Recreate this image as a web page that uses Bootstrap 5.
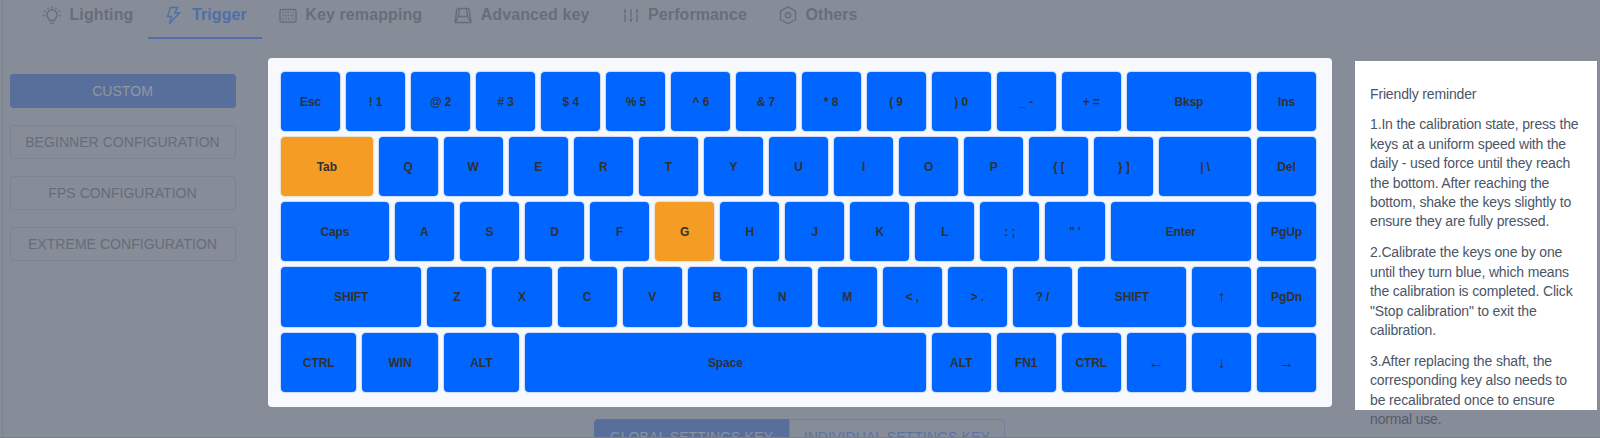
<!DOCTYPE html>
<html lang="en">
<head>
    <meta charset="UTF-8">
    <meta name="viewport" content="width=device-width, initial-scale=1.0">
    <title>Keyboard Calibration</title>
    <link href="https://cdn.jsdelivr.net/npm/bootstrap@5.3.0/dist/css/bootstrap.min.css" rel="stylesheet">
    <style>
        body {
            background: #878d98;
            font-family: "Liberation Sans", Arial, sans-serif;
            height: 438px;
        }
        .page {
            height: 438px;
            padding-left: 2px;
            border-bottom: 1px solid #7c7f8a;
        }
        .page-inner { border-left: 1px solid #7d838e; }

        .top-tabs { height: 39px; padding-left: 23px; }
        .top-tabs .nav-link {
            height: 39px;
            padding: 0 15px;
            gap: 8.5px;
            color: #686e79;
            font-size: 16px;
            font-weight: 700;
            line-height: 30px;
            letter-spacing: .1px;
            border-bottom: 2px solid transparent;
            white-space: nowrap;
        }
        .top-tabs .nav-link.active { color: #4f6fa8; border-color: #4f6fa8; }
        .top-tabs svg {
            flex: none;
            margin-top: 5.5px;
            fill: none;
            stroke: currentColor;
            stroke-width: 1.4;
        }

        .config-list { width: 226px; margin-left: 6.5px; padding-top: 35px; gap: 16.7px; }
        .btn-config {
            height: 34.2px;
            padding: 0;
            color: #666c78;
            border: 1px solid #7e848f;
            border-radius: 3px;
            font-size: 14px;
            line-height: 33px;
            letter-spacing: .05px;
            white-space: nowrap;
        }
        .btn-config.active { background: #576f9a; border-color: #576f9a; color: #9297a1; }

        .keyboard {
            width: 1064px;
            height: 349px;
            margin: 19px 0 0 32px;
            padding: 11px 12.5px 0 10.5px;
            background: #f8f9fc;
            border-radius: 4px;
        }
        .key-row { height: 65.15px; }
        .key-cell { padding: 3px; min-width: 0; }
        .key-cap {
            padding-top: 1px;
            background: #0066ff;
            border-radius: 4px;
            box-shadow: 0 0 1px 1px #c8daf9;
            color: #303133;
            font-size: 12px;
            font-weight: 700;
            letter-spacing: -.1px;
        }
        .key-cap.pending { background: #f59c24; box-shadow: 0 0 1px 1px #eadfd0; }
        .key-cap.arrow { font-size: 16px; font-weight: 400; }

        .reminder {
            width: 242px;
            height: 349px;
            margin: 22px 0 0 23.5px;
            padding: 23.5px 15px 0 15px;
            background: #fff;
            color: #4b5568;
            font-size: 14px;
            line-height: 19.4px;
            letter-spacing: -.15px;
        }
        .reminder p { margin-bottom: 11.5px; }
        .reminder .spill { color: #555b68; }

        .scope-switch { margin: 9px 0 0 591px; height: 22px; overflow: hidden; }
        .scope-switch .btn {
            height: 34px;
            padding: 0;
            width: 194.5px;
            border: 1px solid #7080a0;
            border-radius: 4px 0 0 4px;
            color: #5b73a3;
            font-size: 14px;
            line-height: 34px;
            letter-spacing: .1px;
            white-space: nowrap;
        }
        .scope-switch .btn.active { background: #576f9a; border-color: #576f9a; color: #8b92a0; }
        .scope-switch .btn:last-child { width: 216.5px; border-radius: 0 4px 4px 0; }
    </style>
</head>
<body class="overflow-hidden">
<div class="page overflow-hidden">
    <div class="page-inner h-100">
        <nav class="nav top-tabs flex-nowrap">
            <a class="nav-link d-flex" href="#" id="tabLighting">
                <svg width="20" height="20" viewBox="-1 0 20 20"><path d="M7.5 14.5C7.5 12.5 5 12 5 8.8a5 5 0 0 1 10 0c0 3.200-2.500 3.700-2.500 5.700zM8 17h4M10 .5v2M5.500 1.500l1 1.700M14.500 1.500l-1 1.700M1.800 4.500l1.800 1M18.200 4.500l-1.800 1M.8 9.500h2M17.200 9.500h2"/></svg>
                <span>Lighting</span>
            </a>
            <a class="nav-link d-flex active" href="#" id="tabTrigger">
                <svg width="20" height="20" viewBox="-2 0 20 20"><path d="M5.500 1.500h7L9.800 7H14.500L4.500 17.500l2-7H2.500z"/></svg>
                <span>Trigger</span>
            </a>
            <a class="nav-link d-flex" href="#" id="tabRemap">
                <svg width="20" height="20" viewBox="-2 0 20 20"><rect x="1" y="3.500" width="16" height="12.500" rx="1.500"/><path d="M3.500 6.500h8M3.500 9.500h8M3.500 12.700h1.500M6.500 12.700h5M13 12.700h1.500M14 6v4h-2" stroke-dasharray="1.500 1"/></svg>
                <span>Key remapping</span>
            </a>
            <a class="nav-link d-flex" href="#" id="tabAdvanced">
                <svg width="20" height="20" viewBox="-2 0 20 20"><path d="M4.500 2.500h9q1.400 0 1.700 1.200L17 16.500H1L2.800 3.700Q3.100 2.500 4.500 2.500zM5.500 3L4.200 10.500h9.600L12.500 3M4.200 10.500L1.500 16M13.800 10.500L16.500 16"/></svg>
                <span>Advanced key</span>
            </a>
            <a class="nav-link d-flex" href="#" id="tabPerformance">
                <svg width="20" height="20" viewBox="-2 0 20 20"><path d="M3 8v8M9 3v8M15 8v8M3 3v2M15 3v2M9 14v2"/><path d="M1.200 6.800L3 3.800l1.800 3zM13.200 6.800L15 3.800l1.800 3zM7.200 12.200L9 15.200l1.800-3z" fill="currentColor" stroke="none"/></svg>
                <span>Performance</span>
            </a>
            <a class="nav-link d-flex" href="#" id="tabOthers">
                <svg width="20" height="20" viewBox="-2 .7 20 20"><path d="M9 1.500l7.500 4.200v8.600L9 18.500 1.500 14.300V5.700z"/><circle cx="9" cy="10" r="2.600"/></svg>
                <span>Others</span>
            </a>
        </nav>

        <div class="d-flex align-items-start">
            <div class="config-list d-flex flex-column">
                <button class="btn btn-config active">CUSTOM</button>
                <button class="btn btn-config">BEGINNER CONFIGURATION</button>
                <button class="btn btn-config">FPS CONFIGURATION</button>
                <button class="btn btn-config">EXTREME CONFIGURATION</button>
            </div>
            <div class="keyboard flex-shrink-0" id="keyboard"></div>
            <aside class="reminder flex-shrink-0">
                <p>Friendly reminder</p>
                <p>1.In the calibration state, press the keys at a uniform speed with the daily - used force until they reach the bottom. After reaching the bottom, shake the keys slightly to ensure they are fully pressed.</p>
                <p>2.Calibrate the keys one by one until they turn blue, which means the calibration is completed. Click "Stop calibration" to exit the calibration.</p>
                <p>3.After replacing the shaft, the corresponding key also needs to be recalibrated once to ensure <span class="spill">normal use.</span></p>
            </aside>
        </div>

        <div class="scope-switch d-flex">
            <button class="btn active">GLOBAL SETTINGS KEY</button>
            <button class="btn">INDIVIDUAL SETTINGS KEY</button>
        </div>
    </div>
</div>

<script src="https://cdn.jsdelivr.net/npm/bootstrap@5.3.0/dist/js/bootstrap.bundle.min.js"></script>
<script>
    // a key is a label, or [label, width in key units]
    const rows = [
        ["Esc", "! 1", "@ 2", "# 3", "$ 4", "% 5", "^ 6", "& 7", "* 8", "( 9", ") 0", "_ -", "+ =", ["Bksp", 2], "Ins"],
        [["Tab", 1.5], "Q", "W", "E", "R", "T", "Y", "U", "I", "O", "P", "{ [", "} ]", ["| \\", 1.5], "Del"],
        [["Caps", 1.75], "A", "S", "D", "F", "G", "H", "J", "K", "L", ": ;", "\" '", ["Enter", 2.25], "PgUp"],
        [["SHIFT", 2.25], "Z", "X", "C", "V", "B", "N", "M", "< ,", "> .", "? /", ["SHIFT", 1.75], "↑", "PgDn"],
        [["CTRL", 1.25], ["WIN", 1.25], ["ALT", 1.25], ["Space", 6.25], "ALT", "FN1", "CTRL", "←", "↓", "→"]
    ];
    const pending = ["Tab", "G"];
    const keyboard = document.getElementById("keyboard");

    rows.forEach(function(keys) {
        const row = document.createElement("div");
        row.className = "key-row d-flex";
        keys.forEach(function(key) {
            const [label, units] = Array.isArray(key) ? key : [key, 1];
            const cell = document.createElement("div");
            cell.className = "key-cell";
            cell.style.width = (units / 16 * 100) + "%";
            const cap = document.createElement("div");
            cap.className = "key-cap h-100 d-flex align-items-center justify-content-center";
            if (pending.includes(label)) cap.classList.add("pending");
            if ("←↑→↓".includes(label)) cap.classList.add("arrow");
            cap.textContent = label;
            cell.appendChild(cap);
            row.appendChild(cell);
        });
        keyboard.appendChild(row);
    });
</script>
</body>
</html>
